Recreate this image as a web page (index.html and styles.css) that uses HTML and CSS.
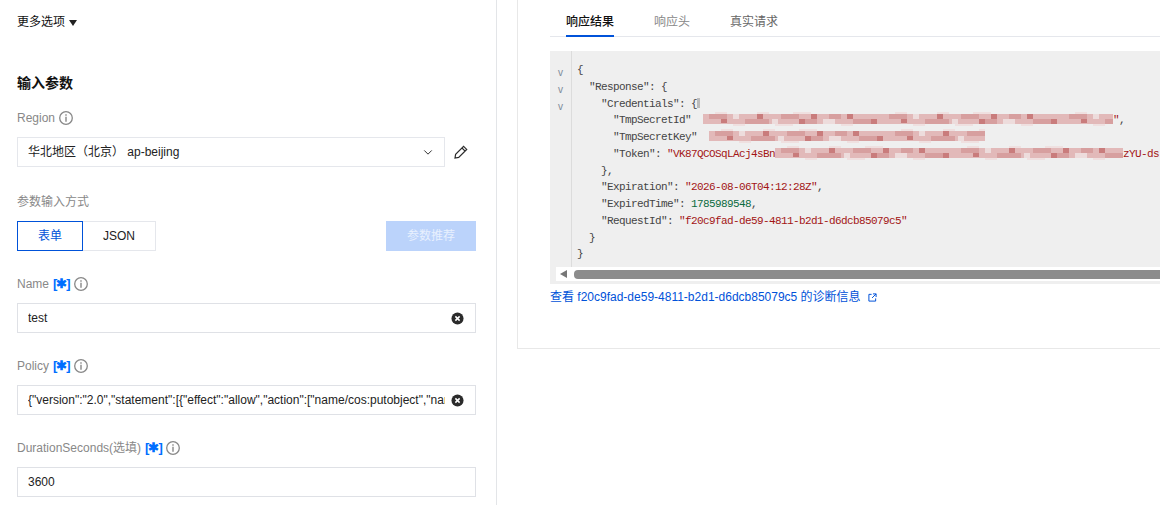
FILE: index.html
```html
<!DOCTYPE html>
<html lang="zh-CN">
<head>
  <meta charset="UTF-8">
  <meta name="viewport" content="width=device-width, initial-scale=1.0">
  <title>API Explorer</title>
  <link rel="stylesheet" href="styles.css">
</head>
<body>
  <svg class="defs" width="0" height="0" aria-hidden="true">
    <defs>
      <pattern id="mosaic" width="120" height="14" patternUnits="userSpaceOnUse" patternTransform="scale(1.5 1)">
        <path fill="#e2b9b9" d="M0 2h80v10H0z"/>
        <path fill="#e2b9b9" d="M80 2h40v10H80z"/>
        <path fill="#efe0e0" d="M8 0h8v2H8zM36 0h8v2h-8zM60 0h12v2H60zM20 12h8v2h-8zM48 12h12v2H48zM92 12h8v2h-8z"/>
        <path fill="#d79f9f" d="M4 2h12v5H4zM28 7h16v5H28zM52 2h12v5H52zM68 7h8v5h-8zM84 2h8v5h-8zM100 7h12v5h-12z"/>
        <path fill="#c97c7c" d="M12 7h4v4h-4zM36 2h4v5h-4zM64 7h4v5h-4zM72 2h4v5h-4zM96 2h4v5h-4zM112 7h4v5h-4z"/>
        <path fill="#eddcdc" d="M20 2h4v5h-4zM46 7h4v5h-4zM80 7h8v5h-8z"/>
      </pattern>
      <symbol id="info" viewBox="0 0 14 14">
        <circle cx="7" cy="7" r="6.3" fill="none" stroke="#888" stroke-width="1.3"/>
        <path fill="#888" d="M6.3 3.3h1.4v1.4H6.3zM6.3 5.8h1.4v4.9H6.3z"/>
      </symbol>
      <symbol id="clear" viewBox="0 0 14 14">
        <circle cx="7" cy="7" r="6.5" fill="#2b2b2b"/>
        <path fill="none" stroke="#fff" stroke-width="1.6" d="M4.7 4.7l4.6 4.6M9.3 4.7L4.7 9.3"/>
      </symbol>
    </defs>
  </svg>

  <div class="page">
    <section class="form-panel">
      <div class="more-options">更多选项 <span class="caret"></span></div>
      <h2 class="section-title">输入参数</h2>

      <div class="field-label">Region <svg class="info"><use href="#info"/></svg></div>
      <div class="region-row">
        <div class="select-box">
          <span>华北地区（北京）&nbsp;ap-beijing</span>
          <svg class="chevron" viewBox="0 0 12 8"><path fill="none" stroke="#333" stroke-width="1.2" d="M1.5 1.5L6 6l4.5-4.5"/></svg>
        </div>
        <svg class="pencil" viewBox="0 0 14 14"><path fill="none" stroke="#2b2b2b" stroke-width="1.2" d="M9.6 1.3l3.1 3.1-8 8-3.7.7.6-3.8zM8 3l3.1 3.1"/></svg>
      </div>

      <div class="field-label label-gap">参数输入方式</div>
      <div class="mode-row">
        <div class="segmented">
          <span class="seg seg-active">表单</span>
          <span class="seg">JSON</span>
        </div>
        <button class="recommend" type="button">参数推荐</button>
      </div>

      <div class="field-label">Name <span class="req">[✱]</span> <svg class="info"><use href="#info"/></svg></div>
      <div class="input-box">
        <input type="text" value="test">
        <svg class="clear"><use href="#clear"/></svg>
      </div>

      <div class="field-label">Policy <span class="req">[✱]</span> <svg class="info"><use href="#info"/></svg></div>
      <div class="input-box">
        <input type="text" value='{"version":"2.0","statement":[{"effect":"allow","action":["name/cos:putobject","name/cos:getobject"]}]}'>
        <svg class="clear"><use href="#clear"/></svg>
      </div>

      <div class="field-label">DurationSeconds(选填) <span class="req">[✱]</span> <svg class="info"><use href="#info"/></svg></div>
      <div class="input-box">
        <input type="text" value="3600">
      </div>
    </section>

    <section class="result-panel">
      <div class="result-card">
        <nav class="tabs">
          <a class="tab tab-active">响应结果</a>
          <a class="tab tab-head">响应头</a>
          <a class="tab">真实请求</a>
        </nav>

        <div class="code-block">
          <div class="code-main">
            <div class="gutter">
              <span class="fold">v</span>
              <span class="fold">v</span>
              <span class="fold">v</span>
            </div>
            <div class="code">
              <div class="line">{</div>
              <div class="line in1">"Response": {</div>
              <div class="line in2">"Credentials": {<i class="cursor"></i></div>
              <div class="line in3">"TmpSecretId"<svg class="blur blur-id"><rect width="100%" height="100%" fill="url(#mosaic)"/></svg><span class="str">"</span>,</div>
              <div class="line in3">"TmpSecretKey"<svg class="blur blur-key"><rect width="100%" height="100%" fill="url(#mosaic)"/></svg></div>
              <div class="line in3">"Token": <span class="str">"VK87QCOSqLAcj4sBn</span><svg class="blur blur-token"><rect width="100%" height="100%" fill="url(#mosaic)"/></svg><span class="str">zYU-ds</span></div>
              <div class="line in2">},</div>
              <div class="line in2">"Expiration": <span class="str">"2026-08-06T04:12:28Z"</span>,</div>
              <div class="line in2">"ExpiredTime": <span class="num">1785989548</span>,</div>
              <div class="line in2">"RequestId": <span class="str">"f20c9fad-de59-4811-b2d1-d6dcb85079c5"</span></div>
              <div class="line in1">}</div>
              <div class="line">}</div>
            </div>
          </div>
          <div class="scrollbar">
            <span class="scroll-arrow"></span>
            <span class="scroll-thumb"></span>
          </div>
        </div>

        <a class="diag-link">查看 f20c9fad-de59-4811-b2d1-d6dcb85079c5 的诊断信息
          <svg class="ext" viewBox="0 0 10 10"><path fill="none" stroke="#0052d9" stroke-width="1.1" d="M4 1.5H1v7.5h7.5V6M5.5 1h3.5v3.5M9 1L4.5 5.5"/></svg>
        </a>
      </div>
    </section>
  </div>
</body>
</html>
```

FILE: styles.css
```css
html, body {
  margin: 0;
  height: 505px;
  overflow: hidden;
  background-color: #fff;
  color: #222;
  font-family: "Liberation Sans", "Noto Sans CJK SC", sans-serif;
  font-size: 12px;
  line-height: 20px;
}
.defs {
  display: block;
  height: 0;
}
.page {
  display: flex;
  height: 505px;
}

/* left form */
.form-panel {
  box-sizing: border-box;
  flex: 0 0 497px;
  padding: 12px 20px 0 17px;
  border-right: 1px solid #e3e5e8;
}
.more-options {
  display: flex;
  align-items: center;
  gap: 4px;
  height: 20px;
  color: #111;
}
.caret {
  width: 0;
  height: 0;
  border-left: 4px solid transparent;
  border-right: 4px solid transparent;
  border-top: 6px solid #222;
  margin-top: 2px;
}
.section-title {
  margin: 40px 0 14px;
  font-size: 14px;
  line-height: 22px;
  color: #111;
}
.field-label {
  display: flex;
  align-items: center;
  gap: 4px;
  height: 20px;
  margin-bottom: 9px;
  color: #888;
}
.label-gap {
  margin-top: 25px;
}
.info {
  width: 14px;
  height: 14px;
}
.req {
  color: #006eff;
  font-weight: bold;
  font-size: 13px;
  letter-spacing: -1px;
}
.region-row {
  display: flex;
  align-items: center;
}
.select-box {
  box-sizing: border-box;
  display: flex;
  align-items: center;
  justify-content: space-between;
  width: 428px;
  height: 30px;
  padding: 0 10px;
  border: 1px solid #e5e7ec;
  color: #222;
}
.chevron {
  width: 10px;
  height: 7px;
  margin-right: 1px;
}
.pencil {
  width: 14px;
  height: 14px;
  margin-left: 9px;
}
.mode-row {
  display: flex;
  justify-content: space-between;
  margin-bottom: 23px;
}
.segmented {
  display: flex;
}
.seg {
  box-sizing: border-box;
  width: 73px;
  height: 30px;
  line-height: 28px;
  text-align: center;
  border: 1px solid #e5e7ec;
  border-left: 0;
  color: #222;
}
.seg-active {
  width: 66px;
  border: 1px solid #0052d9;
  color: #0052d9;
}
.recommend {
  width: 90px;
  height: 30px;
  padding: 0;
  border: 0;
  background-color: #bbd3fb;
  color: #e8f0fe;
  font: inherit;
}
.input-box {
  box-sizing: border-box;
  display: flex;
  align-items: center;
  gap: 6px;
  height: 30px;
  margin-bottom: 23px;
  padding: 0 11px 0 10px;
  border: 1px solid #dfe1e6;
}
.input-box input {
  flex: 1;
  min-width: 0;
  padding: 0;
  border: 0;
  outline: 0;
  background: none;
  color: #222;
  font: inherit;
}
.clear {
  flex: none;
  width: 13px;
  height: 13px;
}

/* right result */
.result-panel {
  flex: 1;
  min-width: 0;
  padding-left: 20px;
}
.result-card {
  box-sizing: border-box;
  height: 349px;
  padding-left: 32px;
  border-left: 1px solid #e8e8e8;
  border-bottom: 1px solid #e8e8e8;
}
.tabs {
  display: flex;
  gap: 40px;
  height: 36px;
  padding: 0 0 0 16px;
  border-bottom: 1px solid #e5e7ec;
}
.tab {
  box-sizing: border-box;
  height: 37px;
  padding-top: 12px;
  line-height: 20px;
  color: #666;
}
.tab-active {
  border-bottom: 2px solid #0052d9;
  color: #111;
  font-weight: 500;
}
.tab-head {
  color: #888;
}
.code-block {
  margin-top: 14px;
  height: 233px;
  background-color: #efefef;
  overflow: hidden;
}
.code-main {
  display: flex;
  height: 216px;
}
.gutter {
  box-sizing: border-box;
  flex: 0 0 22px;
  display: flex;
  flex-direction: column;
  align-items: center;
  height: 216px;
  padding: 13px 0 0 0;
  border-right: 1px solid #dcdcdc;
}
.fold {
  height: 17px;
  line-height: 17px;
  color: #7d8a99;
  font-size: 10px;
}
.code {
  margin: 11px 0 0 5px;
  color: #444;
  font-family: "Liberation Mono", monospace;
  font-size: 11px;
  letter-spacing: -0.6px;
}
.line {
  height: 16.75px;
  line-height: 17px;
  white-space: pre;
}
.in1 {
  padding-left: 12px;
}
.in2 {
  padding-left: 24px;
}
.in3 {
  padding-left: 36px;
}
.str {
  color: #a31515;
}
.num {
  color: #0b6b3f;
}
.blur {
  display: inline-block;
  height: 14px;
  vertical-align: -3px;
}
.blur-id {
  width: 410px;
  margin-left: 12px;
}
.blur-key {
  width: 276px;
  margin-left: 12px;
}
.blur-token {
  width: 348px;
}
.cursor {
  display: inline-block;
  width: 3px;
  height: 10px;
  vertical-align: -1px;
  background-color: #bbb;
}
.scrollbar {
  display: flex;
  align-items: center;
  gap: 7px;
  height: 14px;
  margin-left: 6px;
  background-color: #fff;
}
.scroll-arrow {
  flex: none;
  width: 0;
  height: 0;
  margin-left: 4px;
  border-top: 4px solid transparent;
  border-bottom: 4px solid transparent;
  border-right: 7px solid #777;
}
.scroll-thumb {
  flex: 1;
  height: 9px;
  border-radius: 4px 0 0 4px;
  background-color: #8c8c8c;
}
.diag-link {
  display: flex;
  align-items: center;
  gap: 7px;
  height: 26px;
  color: #0052d9;
}
.ext {
  width: 9px;
  height: 9px;
}
```
